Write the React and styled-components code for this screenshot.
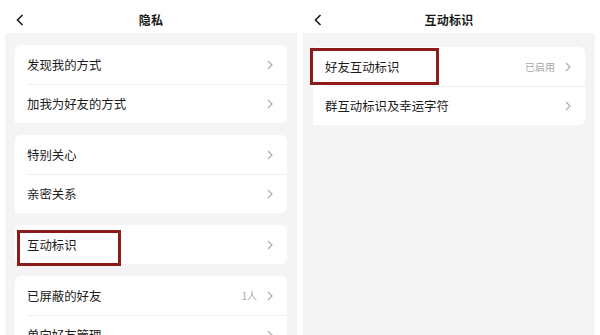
import React from 'react';
import styled, { createGlobalStyle } from 'styled-components';

const GlobalStyle = createGlobalStyle`
  html, body {
    margin: 0;
    padding: 0;
    background: #ffffff;
  }
  body {
    font-family: "Noto Sans CJK SC", "Noto Sans", sans-serif;
    color: #1c1c1c;
  }
`;

const Page = styled.div`
  width: 600px;
  height: 335px;
  overflow: hidden;
  display: flex;
  gap: 6px;
  padding: 0 5px;
  box-sizing: border-box;
  background: #ffffff;
`;

const Screen = styled.div`
  flex: 1;
  display: flex;
  flex-direction: column;
  min-width: 0;
`;

const Header = styled.div`
  height: 33px;
  flex: 0 0 33px;
  background: #ffffff;
  display: flex;
  align-items: center;
  justify-content: center;
  position: relative;
`;

const Back = styled.svg`
  position: absolute;
  left: ${(p) => p.$left}px;
  top: 14px;
`;

const Title = styled.div`
  font-size: 12px;
  font-weight: 600;
  letter-spacing: 0.2px;
  color: #1a1a1a;
  margin-top: 5px;
`;

const Body = styled.div`
  flex: 1;
  background: #f4f4f5;
  padding: ${(p) => p.$top}px 10px 0 10px;
  display: flex;
  flex-direction: column;
  gap: 12px;
`;

const Card = styled.div`
  background: #ffffff;
  border-radius: 6px;
  flex: 0 0 auto;
`;

const Row = styled.div`
  height: 39px;
  display: flex;
  align-items: center;
  padding: 0 14px 0 12px;
  position: relative;
  & + & {
    box-shadow: inset 12px 0 0 #fff, inset 0 1px 0 #f1f1f2;
  }
`;

const Label = styled.span`
  flex: 1;
  font-size: 12.4px;
  color: #1c1c1c;
  white-space: nowrap;
`;

const Extra = styled.span`
  font-size: 10px;
  color: #a8a8a8;
  margin-right: 10px;
`;

const Highlight = styled.div`
  position: absolute;
  left: ${(p) => p.$left}px;
  top: ${(p) => p.$top}px;
  width: ${(p) => p.$width}px;
  height: ${(p) => p.$height}px;
  border: 3px solid #8c1c1c;
  box-sizing: border-box;
  pointer-events: none;
`;

const Chevron = () => (
  <svg width="6" height="10" viewBox="0 0 6 10">
    <polyline points="1,1 5,5 1,9" fill="none" stroke="#adadad" strokeWidth="1.2" />
  </svg>
);

const BackIcon = ({ left }) => (
  <Back $left={left} width="8" height="12" viewBox="0 0 8 12">
    <polyline points="6.5,1 1.5,6 6.5,11" fill="none" stroke="#1a1a1a" strokeWidth="1.6" />
  </Back>
);

const Item = ({ label, extra, highlight }) => (
  <Row>
    <Label>{label}</Label>
    {extra && <Extra>{extra}</Extra>}
    <Chevron />
    {highlight && <Highlight {...highlight} />}
  </Row>
);

const privacy = [
  [{ label: '发现我的方式' }, { label: '加我为好友的方式' }],
  [{ label: '特别关心' }, { label: '亲密关系' }],
  [{ label: '互动标识', highlight: { $left: 2, $top: 5, $width: 104, $height: 36 } }],
  [{ label: '已屏蔽的好友', extra: '1人' }, { label: '单向好友管理' }],
];

const interaction = [
  [
    { label: '好友互动标识', extra: '已启用', highlight: { $left: -3, $top: 1, $width: 129, $height: 37 } },
    { label: '群互动标识及幸运字符' },
  ],
];

const Panel = ({ title, groups, back, top }) => (
  <Screen>
    <Header>
      <BackIcon left={back} />
      <Title>{title}</Title>
    </Header>
    <Body $top={top}>
      {groups.map((g, i) => (
        <Card key={i}>
          {g.map((item) => (
            <Item key={item.label} {...item} />
          ))}
        </Card>
      ))}
    </Body>
  </Screen>
);

export default function App() {
  return (
    <>
      <GlobalStyle />
      <Page>
        <Panel title="隐私" groups={privacy} back={11} top={12} />
        <Panel title="互动标识" groups={interaction} back={11} top={14} />
      </Page>
    </>
  );
}
